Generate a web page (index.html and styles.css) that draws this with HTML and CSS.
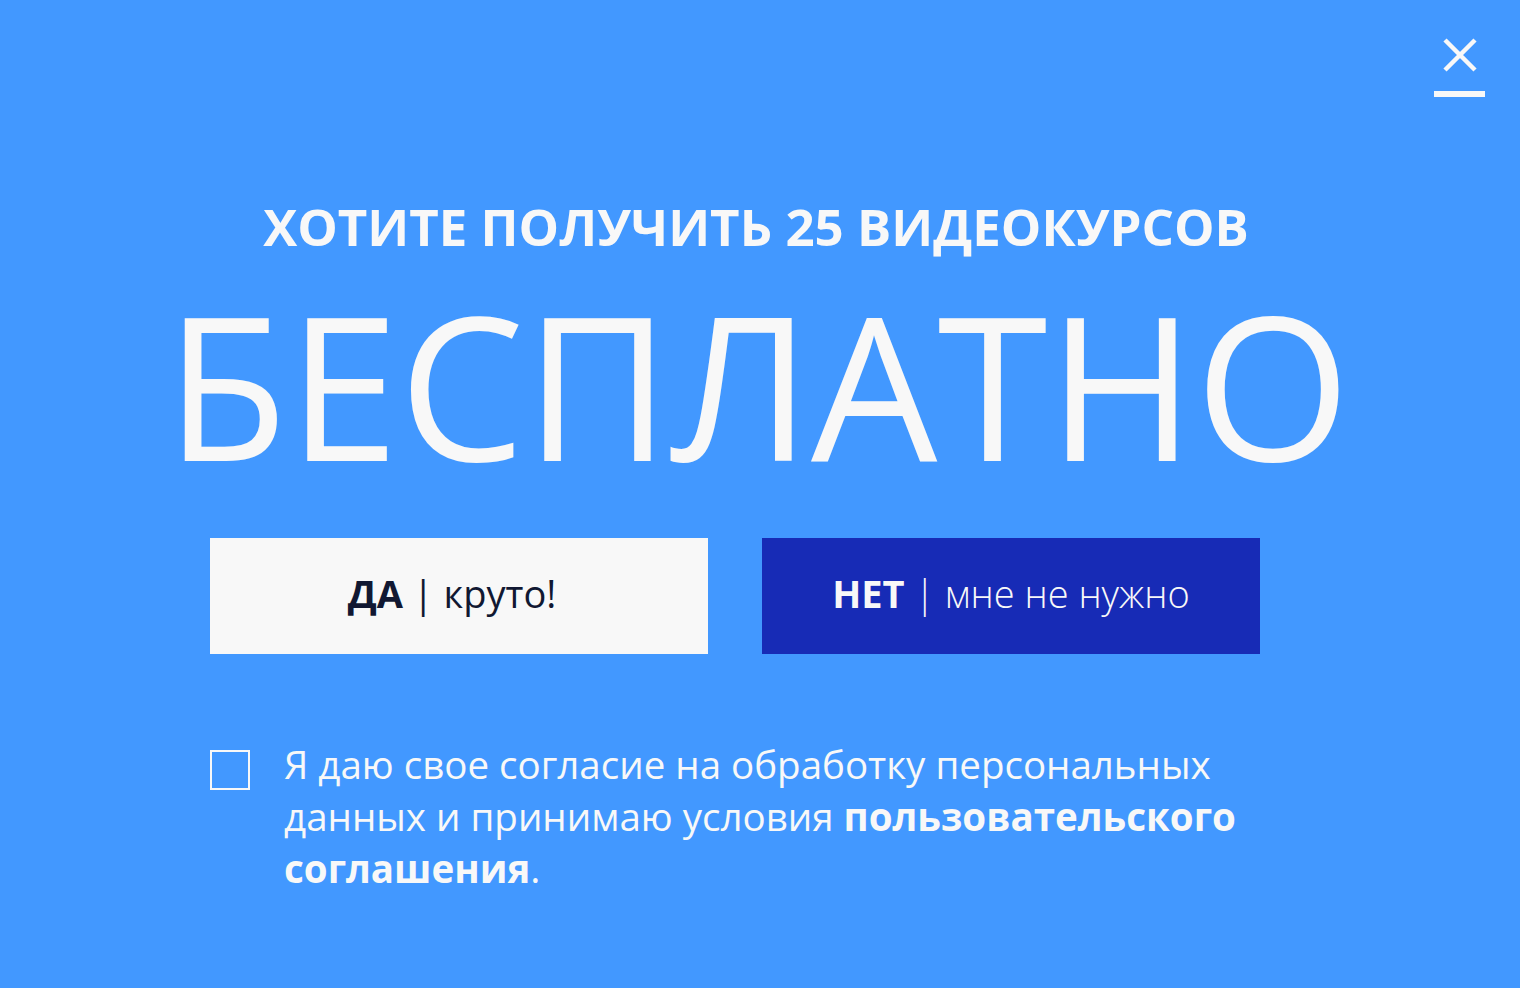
FILE: index.html
```html
<!DOCTYPE html>
<html lang="ru">
<head>
    <meta charset="UTF-8">
    <meta name="viewport" content="width=device-width, initial-scale=1.0">
    <title>Бесплатные видеокурсы</title>
    <link rel="stylesheet" href="styles.css">
</head>
<body>
    <div class="popup">
        <a class="close" href="#" aria-label="Закрыть">
            <svg width="34" height="34" viewBox="0 0 34 34">
                <path d="M2 2 L32 32 M32 2 L2 32" stroke="#f8f8f8" stroke-width="4.5" fill="none"/>
            </svg>
            <span class="close-line"></span>
        </a>

        <h2 class="subtitle">ХОТИТЕ ПОЛУЧИТЬ 25 ВИДЕОКУРСОВ</h2>
        <h1 class="title">БЕСПЛАТНО</h1>

        <div class="form">
            <div class="buttons">
                <button class="btn btn-yes"><b>ДА</b> <span class="sep">|</span> круто!</button>
                <button class="btn btn-no"><b>НЕТ</b> <span class="sep">|</span> мне не нужно</button>
            </div>

            <label class="agree">
                <span class="checkbox"></span>
                <span class="agree-text">Я даю свое согласие на обработку персональных данных и принимаю условия <b>пользовательского соглашения</b>.</span>
            </label>
        </div>
    </div>
</body>
</html>
```

FILE: styles.css
```css
html, body {
    margin: 0;
    padding: 0;
    height: 100%;
    background-color: #4298ff;
    font-family: 'Open Sans', 'Noto Sans', sans-serif;
    color: #f8f8f8;
}
.popup {
    position: relative;
    min-height: 100%;
    padding-top: 191px;
    box-sizing: border-box;
}
.close {
    position: absolute;
    top: 38px;
    right: 35px;
    width: 51px;
    display: flex;
    flex-direction: column;
    align-items: center;
}
.close svg {
    display: block;
}
.close-line {
    display: block;
    width: 51px;
    height: 6px;
    margin-top: 19px;
    background: #f8f8f8;
}
.subtitle {
    margin: 0;
    padding-right: 8px;
    text-align: center;
    font-size: 51px;
    font-weight: 700;
    line-height: 70px;
}
.title {
    margin: 13px 0 0;
    text-align: center;
    font-size: 200px;
    font-weight: 400;
    line-height: 220px;
    padding-right: 4px;
}
.form {
    width: 1050px;
    margin: 44px 0 0 210px;
}
.buttons {
    display: flex;
    gap: 54px;
}
.btn {
    flex: none;
    width: 498px;
    height: 116px;
    box-sizing: border-box;
    padding: 0 0 6px;
    border: none;
    font-family: inherit;
    font-size: 38px;
    cursor: pointer;
}
.btn b {
    font-weight: 700;
}
.btn-yes {
    padding-right: 14px;
    background: #f8f8f8;
    color: #111832;
    font-weight: 400;
}
.btn-no {
    background: #172bb6;
    color: #f8f8f8;
    font-weight: 300;
}
.agree {
    display: flex;
    gap: 34px;
    margin-top: 84px;
    cursor: pointer;
}
.checkbox {
    flex: none;
    width: 36px;
    height: 36px;
    border: 2px solid #f8f8f8;
    margin-top: 12px;
}
.agree-text {
    font-size: 38.5px;
    line-height: 52px;
    font-weight: 400;
}
.agree-text b {
    font-weight: 700;
}
```
